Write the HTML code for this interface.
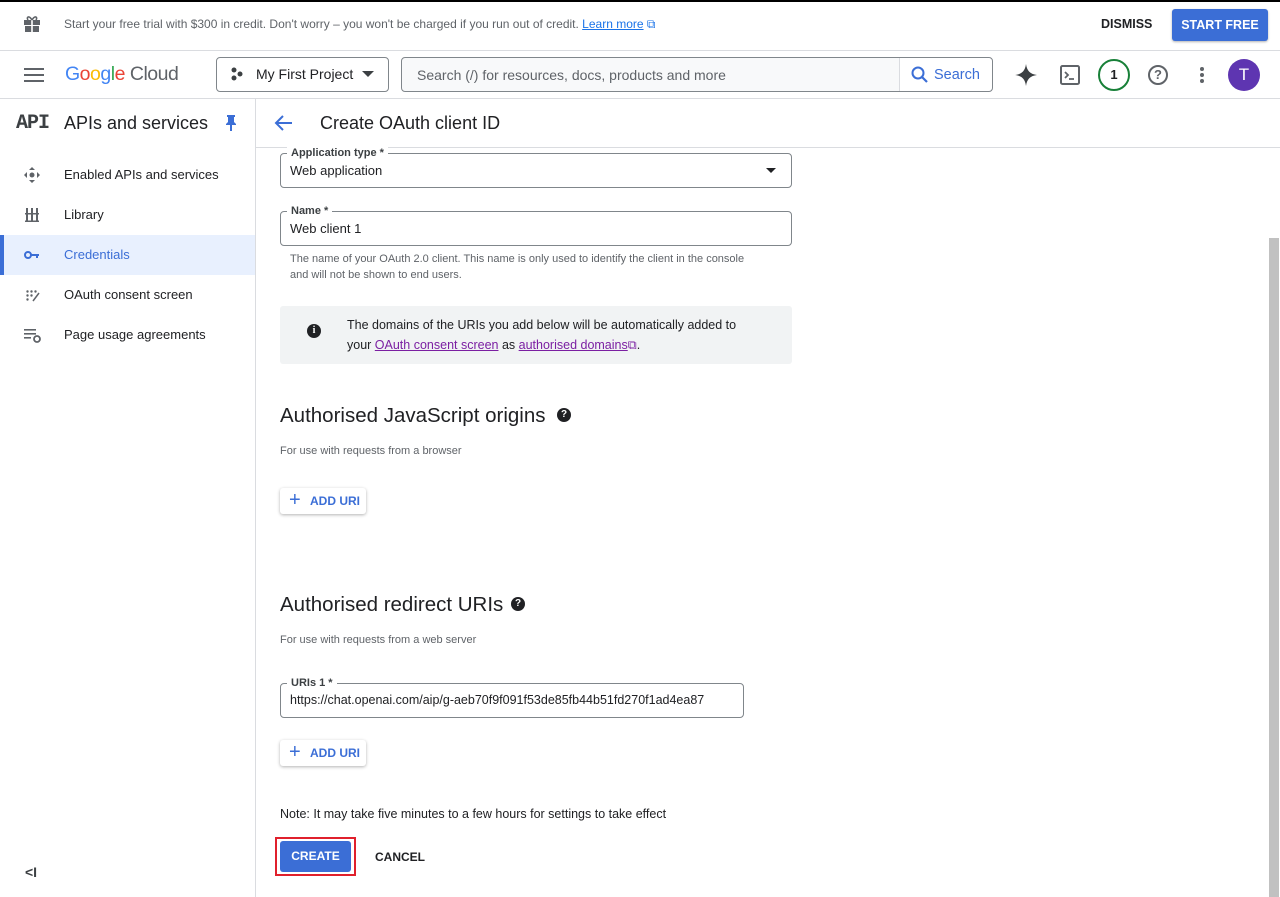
<!DOCTYPE html>
<html><head><meta charset="utf-8"><style>
*{box-sizing:border-box;margin:0;padding:0}
body{width:1280px;height:897px;overflow:hidden;background:#fff;font-family:"Liberation Sans",Arial,sans-serif;color:#202124;position:relative}
.a{position:absolute}
.t{white-space:nowrap}
.fld{position:absolute;border:1px solid #80868b;border-radius:4px;height:35px;padding-left:9px;font-size:13px;line-height:33px;color:#202124}
.lab{position:absolute;top:-8px;left:6px;background:#fff;padding:0 4px;font-size:11px;line-height:14px;color:#3c4043;font-weight:bold}
.addbtn{position:absolute;height:26px;width:86px;border-radius:3px;box-shadow:0 1px 3px rgba(0,0,0,.3);color:#3b6ed6;font-size:12px;font-weight:bold;line-height:26px;padding-left:30px}
.addbtn:before{content:"+";position:absolute;left:9px;top:-1px;font-size:20px;font-weight:normal}
.nav{position:absolute;left:0;width:255px;height:40px;font-size:13px;line-height:40px;padding-left:64px;color:#202124}
</style></head><body>
<div class="a" style="left:0;top:0;width:1280px;height:2px;background:#000"></div>
<svg class="a" style="left:23px;top:15px" width="18" height="18" viewBox="0 0 18 18"><rect x="1" y="5" width="16" height="5" fill="#5f6368"/><rect x="2" y="11" width="14" height="6" fill="#5f6368"/><rect x="8.2" y="5" width="1.6" height="12" fill="#fff"/><path d="M9 5 C6 0 3 2 5 5 M9 5 C12 0 15 2 13 5" stroke="#5f6368" stroke-width="1.6" fill="none"/></svg>
<div class="a t" style="left:64px;top:17px;font-size:12px;color:#5f6368">Start your free trial with $300 in credit. Don't worry – you won't be charged if you run out of credit. <span style="color:#1a73e8;text-decoration:underline">Learn more</span><span style="color:#1a73e8"> ⧉</span></div>
<div class="a t" style="left:1101px;top:17px;font-size:12.5px;font-weight:bold;color:#202124">DISMISS</div>
<div class="a" style="left:1172px;top:9px;width:96px;height:32px;background:#3b6ed6;border-radius:3px;box-shadow:0 1px 2px rgba(0,0,0,.3);color:#fff;font-size:12.5px;font-weight:bold;text-align:center;line-height:32px">START FREE</div>
<div class="a" style="left:0;top:50px;width:1280px;height:1px;background:#dadce0"></div>
<div class="a" style="left:24px;top:68px;width:20px;height:2px;background:#5f6368;box-shadow:0 6px 0 #5f6368,0 12px 0 #5f6368"></div>
<div class="a t" style="left:65px;top:63px;font-size:19.5px;letter-spacing:-.5px"><span style="color:#4285f4">G</span><span style="color:#ea4335">o</span><span style="color:#fbbc04">o</span><span style="color:#4285f4">g</span><span style="color:#34a853">l</span><span style="color:#ea4335">e</span><span style="color:#5f6368"> Cloud</span></div>
<div class="a" style="left:216px;top:57px;width:173px;height:35px;border:1px solid #80868b;border-radius:4px"></div>
<svg class="a" style="left:230px;top:67px" width="14" height="14"><circle cx="4" cy="3" r="2.5" fill="#3c4043"/><circle cx="4" cy="11" r="2.5" fill="#3c4043"/><circle cx="10" cy="7" r="2.5" fill="#3c4043"/></svg>
<div class="a t" style="left:256px;top:66px;font-size:14px;color:#202124">My First Project</div>
<div class="a" style="left:362px;top:71px;border-left:6px solid transparent;border-right:6px solid transparent;border-top:6px solid #3c4043"></div>
<div class="a" style="left:401px;top:57px;width:592px;height:35px;border:1px solid #80868b;border-radius:4px;background:#f8f9fa"></div>
<div class="a" style="left:899px;top:58px;width:93px;height:33px;background:#fff;border-left:1px solid #dadce0;border-radius:0 4px 4px 0"></div>
<div class="a t" style="left:417px;top:67px;font-size:14px;color:#5f6368">Search (/) for resources, docs, products and more</div>
<svg class="a" style="left:910px;top:65px" width="20" height="20" viewBox="0 0 20 20"><circle cx="8" cy="8" r="5.5" stroke="#3b6ed6" stroke-width="2" fill="none"/><path d="M12 12 L17 17" stroke="#3b6ed6" stroke-width="2.2"/></svg>
<div class="a t" style="left:934px;top:67px;font-size:14.5px;color:#3b6ed6">Search</div>
<svg class="a" style="left:1014px;top:63px" width="24" height="24" viewBox="0 0 24 24"><path d="M12 1 C13 8 16 11 23 12 C16 13 13 16 12 23 C11 16 8 13 1 12 C8 11 11 8 12 1Z" fill="#3c4043"/></svg>
<svg class="a" style="left:1060px;top:65px" width="20" height="20" viewBox="0 0 20 20"><rect x="1" y="1" width="18" height="18" rx="1.5" stroke="#5f6368" stroke-width="2" fill="none"/><path d="M5 7 L8 10 L5 13 M9 14 H14" stroke="#5f6368" stroke-width="1.8" fill="none"/></svg>
<div class="a" style="left:1098px;top:59px;width:32px;height:32px;border:2px solid #188038;border-radius:50%;text-align:center;line-height:28px;font-size:13px;font-weight:bold;color:#202124">1</div>
<div class="a" style="left:1148px;top:65px;width:20px;height:20px;border:2px solid #5f6368;border-radius:50%;text-align:center;line-height:16px;font-size:13px;font-weight:bold;color:#5f6368">?</div>
<div class="a" style="left:1200px;top:67px;width:4px;height:4px;background:#5f6368;border-radius:50%;box-shadow:0 6px 0 #5f6368,0 12px 0 #5f6368"></div>
<div class="a" style="left:1228px;top:59px;width:32px;height:32px;background:#5e35b1;border-radius:50%;color:#fff;text-align:center;line-height:32px;font-size:17px">T</div>
<div class="a" style="left:0;top:98px;width:1280px;height:1px;background:#dadce0"></div>
<div class="a t" style="left:16px;top:112px;font-family:'Liberation Mono',monospace;font-size:20px;font-weight:bold;color:#3c4043;letter-spacing:-1px">API</div>
<div class="a t" style="left:64px;top:113px;font-size:18px;color:#202124">APIs and services</div>
<svg class="a" style="left:224px;top:114px" width="14" height="18" viewBox="0 0 14 18"><path d="M3 1 H11 V3 H10 V8 L12 10 V11 H8 V17 H6 V11 H2 V10 L4 8 V3 H3Z" fill="#3b6ed6"/></svg>
<div class="a" style="left:255px;top:99px;width:1px;height:798px;background:#dadce0"></div>
<svg class="a" style="left:274px;top:113px" width="20" height="20" viewBox="0 0 20 20"><path d="M18 10 H3 M9 3 L2 10 L9 17" stroke="#3b6ed6" stroke-width="2" fill="none"/></svg>
<div class="a t" style="left:320px;top:113px;font-size:18px;color:#202124">Create OAuth client ID</div>
<div class="a" style="left:256px;top:147px;width:1024px;height:1px;background:#dadce0"></div>
<div class="nav" style="top:155px">Enabled APIs and services</div>
<svg class="a" style="left:24px;top:167px" width="16" height="16" viewBox="0 0 16 16" fill="#5f6368"><path d="M8 0 L11 3 H5Z M8 16 L5 13 H11Z M0 8 L3 5 V11Z M16 8 L13 11 V5Z"/><circle cx="8" cy="8" r="2.5"/></svg>
<div class="nav" style="top:195px">Library</div>
<svg class="a" style="left:25px;top:208px" width="14" height="14" viewBox="0 0 14 14" fill="#5f6368"><rect x="1" y="0" width="2" height="14"/><rect x="6" y="0" width="2" height="14"/><rect x="11" y="0" width="2" height="14"/><rect x="0" y="5" width="14" height="1.5"/><rect x="0" y="12.5" width="14" height="1.5"/></svg>
<div class="nav" style="top:235px;background:#e8f0fe;color:#3b6ed6">Credentials</div>
<div class="a" style="left:0;top:235px;width:4px;height:40px;background:#3b6ed6"></div>
<svg class="a" style="left:24px;top:250px" width="16" height="10" viewBox="0 0 16 10"><circle cx="4" cy="5" r="3" stroke="#3b6ed6" stroke-width="2" fill="none"/><path d="M7 5 H15 M13 5 V8" stroke="#3b6ed6" stroke-width="2"/></svg>
<div class="nav" style="top:275px">OAuth consent screen</div>
<svg class="a" style="left:26px;top:290px" width="14" height="12" viewBox="0 0 14 12" fill="#5f6368"><circle cx="1.5" cy="1.5" r="1.2"/><circle cx="5.5" cy="1.5" r="1.2"/><circle cx="9.5" cy="1.5" r="1.2"/><circle cx="1.5" cy="5.5" r="1.2"/><circle cx="5.5" cy="5.5" r="1.2"/><circle cx="1.5" cy="9.5" r="1.2"/><path d="M7 11 L13 3" stroke="#5f6368" stroke-width="1.5"/></svg>
<div class="nav" style="top:315px">Page usage agreements</div>
<svg class="a" style="left:24px;top:329px" width="18" height="14" viewBox="0 0 18 14" fill="#5f6368"><rect x="0" y="0" width="12" height="1.6"/><rect x="0" y="4" width="12" height="1.6"/><rect x="0" y="8" width="7" height="1.6"/><circle cx="13" cy="10" r="3" stroke="#5f6368" stroke-width="1.8" fill="none"/></svg>
<div class="a t" style="left:25px;top:864px;font-size:14px;color:#3c4043;font-weight:bold">&lt;I</div>
<div class="fld" style="left:280px;top:153px;width:512px">Web application<div class="lab">Application type *</div></div>
<div class="a" style="left:766px;top:168px;border-left:5px solid transparent;border-right:5px solid transparent;border-top:5px solid #202124"></div>
<div class="fld" style="left:280px;top:211px;width:512px">Web client 1<div class="lab">Name *</div></div>
<div class="a" style="left:290px;top:251px;width:455px;font-size:11px;line-height:16px;color:#5f6368">The name of your OAuth 2.0 client. This name is only used to identify the client in the console and will not be shown to end users.</div>
<div class="a" style="left:280px;top:306px;width:512px;height:58px;background:#f1f3f4;border-radius:3px"></div>
<div class="a" style="left:307px;top:324px;width:14px;height:14px;background:#202124;border-radius:50%;color:#fff;font-size:10px;font-weight:bold;text-align:center;line-height:14px;font-family:'Liberation Serif',serif">i</div>
<div class="a" style="left:347px;top:315px;width:410px;font-size:12.5px;line-height:20px;color:#202124">The domains of the URIs you add below will be automatically added to your <span style="color:#7b1fa2;text-decoration:underline">OAuth consent screen</span> as <span style="color:#7b1fa2;text-decoration:underline">authorised domains</span><span style="color:#7b1fa2">⧉</span>.</div>
<div class="a t" style="left:280px;top:404px;font-size:20.5px;color:#202124">Authorised JavaScript origins</div>
<div class="a" style="left:557px;top:408px;width:14px;height:14px;background:#202124;border-radius:50%;color:#fff;font-size:10px;font-weight:bold;text-align:center;line-height:14px">?</div>
<div class="a t" style="left:280px;top:445px;font-size:11px;color:#5f6368">For use with requests from a browser</div>
<div class="addbtn" style="left:280px;top:488px">ADD URI</div>
<div class="a t" style="left:280px;top:593px;font-size:20.5px;color:#202124">Authorised redirect URIs</div>
<div class="a" style="left:511px;top:597px;width:14px;height:14px;background:#202124;border-radius:50%;color:#fff;font-size:10px;font-weight:bold;text-align:center;line-height:14px">?</div>
<div class="a t" style="left:280px;top:634px;font-size:11px;color:#5f6368">For use with requests from a web server</div>
<div class="fld t" style="left:280px;top:683px;width:464px;font-size:12.5px">https://chat.openai.com/aip/g-aeb70f9f091f53de85fb44b51fd270f1ad4ea87<div class="lab">URIs 1 *</div></div>
<div class="addbtn" style="left:280px;top:740px">ADD URI</div>
<div class="a t" style="left:280px;top:807px;font-size:12.5px;color:#202124">Note: It may take five minutes to a few hours for settings to take effect</div>
<div class="a" style="left:275px;top:837px;width:81px;height:39px;border:2px solid #e0202c"></div>
<div class="a" style="left:280px;top:841px;width:71px;height:31px;background:#3b6ed6;border-radius:3px;color:#fff;font-size:12px;font-weight:bold;text-align:center;line-height:31px">CREATE</div>
<div class="a t" style="left:375px;top:850px;font-size:12px;font-weight:bold;color:#202124">CANCEL</div>
<div class="a" style="left:1269px;top:238px;width:10px;height:659px;background:#c1c1c1"></div>
</body></html>
